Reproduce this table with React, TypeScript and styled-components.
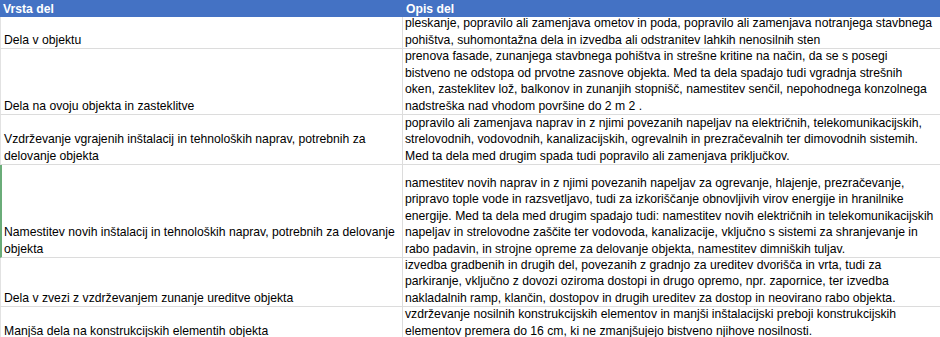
import React from "react";
import styled, { createGlobalStyle } from "styled-components";

const Global = createGlobalStyle`
  html, body { margin: 0; padding: 0; background: #ffffff; }
  body { font-family: "Liberation Sans", Arial, sans-serif; overflow: hidden; }
`;

const Sheet = styled.div`
  width: 940px;
  height: 337px;
  overflow: hidden;
  display: grid;
  grid-template-columns: 403px 600px;
  grid-auto-rows: auto;
  font-size: 12.2px;
  color: #000;
`;

const HeadCell = styled.div`
  height: 17px;
  background: #4472c4;
  color: #ffffff;
  font-weight: bold;
  line-height: 16px;
  padding-left: 3px;
  display: flex;
  align-items: center;
  white-space: nowrap;
`;

const Cell = styled.div<{ $first?: boolean; $h: number; $mark?: boolean }>`
  box-sizing: border-box;
  height: ${(p) => p.$h}px;
  border-bottom: 1px solid #dcdcdc;
  border-right: ${(p) => (p.$first ? "1px solid #dcdcdc" : "none")};
  border-left: ${(p) =>
    p.$first ? (p.$mark ? "2px solid #6aac78" : "1px solid #e2e2e2") : "none"};
  padding-left: ${(p) => (p.$first ? (p.$mark ? "2px" : "3px") : "2px")};
  display: flex;
  flex-direction: column;
  justify-content: flex-end;
  line-height: 16.5px;
  overflow: hidden;
`;

const Line = styled.span`
  display: block;
  white-space: nowrap;
`;

type Row = { h: number; kind: string[]; desc: string[]; mark?: boolean };

const rows: Row[] = [
  {
    h: 32,
    kind: ["Dela v objektu"],
    desc: [
      "pleskanje, popravilo ali zamenjava ometov in poda, popravilo ali zamenjava notranjega stavbnega",
      "pohištva, suhomontažna dela in izvedba ali odstranitev lahkih nenosilnih sten",
    ],
  },
  {
    h: 66,
    kind: ["Dela na ovoju objekta in zasteklitve"],
    desc: [
      "prenova fasade, zunanjega stavbnega pohištva in strešne kritine na način, da se s posegi",
      "bistveno ne odstopa od prvotne zasnove objekta. Med ta dela spadajo tudi vgradnja strešnih",
      "oken, zasteklitev lož, balkonov in zunanjih stopnišč, namestitev senčil, nepohodnega konzolnega",
      "nadstreška nad vhodom površine do 2 m 2 .",
    ],
  },
  {
    h: 50,
    kind: [
      "Vzdrževanje vgrajenih inštalacij in tehnoloških naprav, potrebnih za",
      "delovanje objekta",
    ],
    desc: [
      "popravilo ali zamenjava naprav in z njimi povezanih napeljav na električnih, telekomunikacijskih,",
      "strelovodnih, vodovodnih, kanalizacijskih, ogrevalnih in prezračevalnih ter dimovodnih sistemih.",
      "Med ta dela med drugim spada tudi popravilo ali zamenjava priključkov.",
    ],
  },
  {
    h: 93,
    mark: true,
    kind: [
      "Namestitev novih inštalacij in tehnoloških naprav, potrebnih za delovanje",
      "objekta",
    ],
    desc: [
      "namestitev novih naprav in z njimi povezanih napeljav za ogrevanje, hlajenje, prezračevanje,",
      "pripravo tople vode in razsvetljavo, tudi za izkoriščanje obnovljivih virov energije in hranilnike",
      "energije. Med ta dela med drugim spadajo tudi: namestitev novih električnih in telekomunikacijskih",
      "napeljav in strelovodne zaščite ter vodovoda, kanalizacije, vključno s sistemi za shranjevanje in",
      "rabo padavin, in strojne opreme za delovanje objekta, namestitev dimniških tuljav.",
    ],
  },
  {
    h: 49,
    kind: ["Dela v zvezi z vzdrževanjem zunanje ureditve objekta"],
    desc: [
      "izvedba gradbenih in drugih del, povezanih z gradnjo za ureditev dvorišča in vrta, tudi za",
      "parkiranje, vključno z dovozi oziroma dostopi in drugo opremo, npr. zapornice, ter izvedba",
      "nakladalnih ramp, klančin, dostopov in drugih ureditev za dostop in neovirano rabo objekta.",
    ],
  },
  {
    h: 33,
    kind: ["Manjša dela na konstrukcijskih elementih objekta"],
    desc: [
      "vzdrževanje nosilnih konstrukcijskih elementov in manjši inštalacijski preboji konstrukcijskih",
      "elementov premera do 16 cm, ki ne zmanjšujejo bistveno njihove nosilnosti.",
    ],
  },
];

export default function App() {
  return (
    <>
      <Global />
      <Sheet>
        <HeadCell>Vrsta del</HeadCell>
        <HeadCell>Opis del</HeadCell>
        {rows.map((r, i) => (
          <React.Fragment key={i}>
            <Cell $first $h={r.h} $mark={r.mark}>
              {r.kind.map((l, j) => (
                <Line key={j}>{l}</Line>
              ))}
            </Cell>
            <Cell $h={r.h}>
              {r.desc.map((l, j) => (
                <Line key={j}>{l}</Line>
              ))}
            </Cell>
          </React.Fragment>
        ))}
      </Sheet>
    </>
  );
}
